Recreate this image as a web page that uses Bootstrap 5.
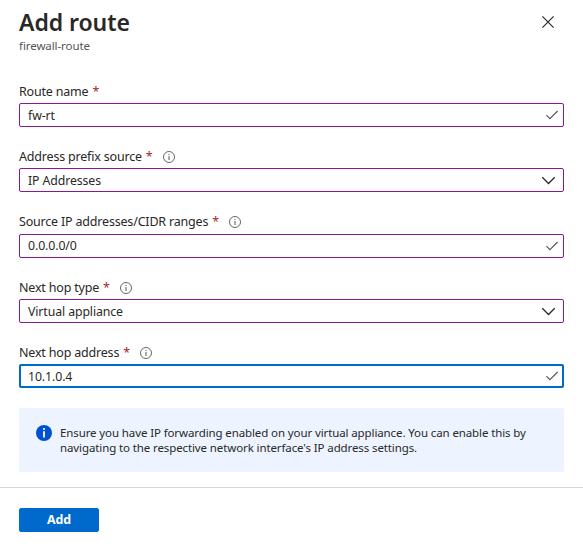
<!DOCTYPE html>
<html lang="en">
<head>
<meta charset="utf-8">
<meta name="viewport" content="width=device-width, initial-scale=1">
<title>Add route</title>
<link href="https://cdn.jsdelivr.net/npm/bootstrap@5.3.0/dist/css/bootstrap.min.css" rel="stylesheet">
<style>
body{font-family:"Noto Sans","Open Sans",sans-serif;font-size:12.5px;line-height:16px;color:#292827;background:#fff;overflow:hidden}
.blade-head{padding:8px 19px 0;height:83px}
.blade-title{font-size:23px;line-height:28px;font-weight:600;letter-spacing:-.06px;color:#292827}
.blade-sub{font-size:11.5px;line-height:16px;color:#555;margin-top:2px;letter-spacing:-.08px}
.blade-close{margin:8px 10px 0 0;width:12px;height:12px}
.blade-form{padding:0 19px}
.field{height:65px}
.field-tall{height:66px}
.field .form-label{height:16px;line-height:16px;margin-bottom:4px;display:flex;align-items:center;letter-spacing:-.19px}
.field-low .form-label{padding-top:1px;height:17px;margin-bottom:3px}
.field-low .form-label{line-height:18px}
.req{color:#a4262c;margin-left:4px}
.hint{width:12px;height:12px;margin-left:10px}
.box{position:relative}
.box .form-control,.box .form-select{height:24px;min-height:24px;padding:0 30px 0 8px;font-size:12.3px;line-height:22px;letter-spacing:-.1px;border:1px solid #881798;border-radius:2px;color:#292827;background:#fff;box-shadow:none}
.box .form-select{padding-top:1px}
.box .form-control.raised{padding-bottom:1px}
.box .form-control.current{border:2px solid #0069cc;padding-left:7px;line-height:20px}
.box svg{position:absolute;top:0;right:0;pointer-events:none}
.note{margin:-1px 19px 0;height:64px;padding:17px 16px 0 17px;background:#edf4ff;border-radius:2px;font-size:11.5px;letter-spacing:-.11px;line-height:15px;color:#292827;gap:8px}
.blade-foot{margin-top:15px;padding:20px 19px 0;border-top:1px solid #d6d6d6}
.btn-add{width:80px;height:24px;padding:0;line-height:22px;font-size:12.4px;font-weight:700;border-radius:2px;background:#0069cc;border-color:#0069cc}
</style>
<script src="https://cdn.jsdelivr.net/npm/bootstrap@5.3.0/dist/js/bootstrap.bundle.min.js"></script>
</head>
<body>
<svg class="d-none" aria-hidden="true">
  <symbol id="info" viewBox="0 0 12 12"><circle cx="6" cy="6" r="5.5" fill="none" stroke="#555" stroke-width=".9"/><path d="M6 5v4M6 3v1" stroke="#555" stroke-width="1"/></symbol>
  <symbol id="tick" viewBox="0 0 24 24"><path d="M6.4 12.2l3.5 3.5 7.7-7.7" fill="none" stroke="#555" stroke-width="1.1"/></symbol>
  <symbol id="chev" viewBox="0 0 24 24"><path d="M2.3 9.3l6.2 6.2 6.2-6.2" fill="none" stroke="#292827" stroke-width="1.3"/></symbol>
</svg>
<main>
  <header class="blade-head d-flex justify-content-between">
    <div>
      <h1 class="blade-title mb-0">Add route</h1>
      <div class="blade-sub">firewall-route</div>
    </div>
    <svg class="blade-close" viewBox="0 0 12 12" role="img" aria-label="Close"><path d="M.4.4l11.2 11.2M11.6.4L.4 11.6" stroke="#292827" stroke-width="1.15"/></svg>
  </header>
  <form class="blade-form">
    <div class="field field-low">
      <label class="form-label" for="rn"><span>Route name</span><span class="req">*</span></label>
      <div class="box"><input id="rn" class="form-control" value="fw-rt"><svg width="24" height="24"><use href="#tick"/></svg></div>
    </div>
    <div class="field field-tall field-low">
      <label class="form-label" for="ps"><span>Address prefix source</span><span class="req">*</span><svg class="hint"><use href="#info"/></svg></label>
      <div class="box"><select id="ps" class="form-select"><option>IP Addresses</option></select><svg width="24" height="24"><use href="#chev"/></svg></div>
    </div>
    <div class="field">
      <label class="form-label" for="ip"><span>Source IP addresses/CIDR ranges</span><span class="req">*</span><svg class="hint"><use href="#info"/></svg></label>
      <div class="box"><input id="ip" class="form-control raised" value="0.0.0.0/0"><svg width="24" height="24"><use href="#tick"/></svg></div>
    </div>
    <div class="field field-low">
      <label class="form-label" for="nt"><span>Next hop type</span><span class="req">*</span><svg class="hint"><use href="#info"/></svg></label>
      <div class="box"><select id="nt" class="form-select"><option>Virtual appliance</option></select><svg width="24" height="24"><use href="#chev"/></svg></div>
    </div>
    <div class="field field-low">
      <label class="form-label" for="na"><span>Next hop address</span><span class="req">*</span><svg class="hint"><use href="#info"/></svg></label>
      <div class="box"><input id="na" class="form-control current" value="10.1.0.4"><svg width="24" height="24"><use href="#tick"/></svg></div>
    </div>
  </form>
  <div class="note d-flex align-items-start" role="note">
    <svg class="flex-shrink-0" width="16" height="16" viewBox="0 0 16 16"><circle cx="8" cy="8" r="8" fill="#0050d4"/><circle cx="8" cy="4" r="1.1" fill="#fff"/><path d="M8 6.3v6.2" stroke="#fff" stroke-width="1.8"/></svg>
    <div>Ensure you have IP forwarding enabled on your virtual appliance. You can enable this by<br>navigating to the respective network interface's IP address settings.</div>
  </div>
  <footer class="blade-foot"><button type="button" class="btn btn-primary btn-add d-block">Add</button></footer>
</main>
</body>
</html>
